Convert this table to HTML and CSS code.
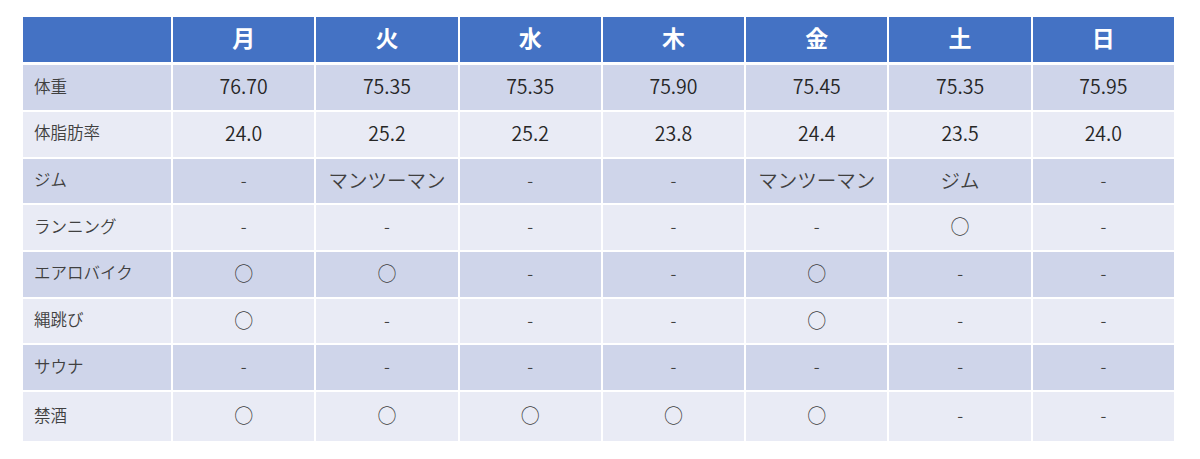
FILE: index.html
```html
<!DOCTYPE html>
<html lang="ja">
<head>
<meta charset="utf-8">
<title>週間記録</title>
<link rel="stylesheet" href="styles.css">
</head>
<body>
<div class="page">
  <div class="table">
    <div class="head">
      <div class="hcell"></div>
      <div class="hcell">月</div>
      <div class="hcell">火</div>
      <div class="hcell">水</div>
      <div class="hcell">木</div>
      <div class="hcell">金</div>
      <div class="hcell">土</div>
      <div class="hcell">日</div>
    </div>
    <div class="body">
      <div class="row dark">
        <div class="label">体重</div>
        <div class="cell">76.70</div><div class="cell">75.35</div><div class="cell">75.35</div><div class="cell">75.90</div><div class="cell">75.45</div><div class="cell">75.35</div><div class="cell">75.95</div>
      </div>
      <div class="row light">
        <div class="label">体脂肪率</div>
        <div class="cell">24.0</div><div class="cell">25.2</div><div class="cell">25.2</div><div class="cell">23.8</div><div class="cell">24.4</div><div class="cell">23.5</div><div class="cell">24.0</div>
      </div>
      <div class="row dark">
        <div class="label">ジム</div>
        <div class="cell dash">-</div><div class="cell kana">マンツーマン</div><div class="cell dash">-</div><div class="cell dash">-</div><div class="cell kana">マンツーマン</div><div class="cell kana">ジム</div><div class="cell dash">-</div>
      </div>
      <div class="row light">
        <div class="label">ランニング</div>
        <div class="cell dash">-</div><div class="cell dash">-</div><div class="cell dash">-</div><div class="cell dash">-</div><div class="cell dash">-</div><div class="cell mark">○</div><div class="cell dash">-</div>
      </div>
      <div class="row dark">
        <div class="label">エアロバイク</div>
        <div class="cell mark">○</div><div class="cell mark">○</div><div class="cell dash">-</div><div class="cell dash">-</div><div class="cell mark">○</div><div class="cell dash">-</div><div class="cell dash">-</div>
      </div>
      <div class="row light">
        <div class="label">縄跳び</div>
        <div class="cell mark">○</div><div class="cell dash">-</div><div class="cell dash">-</div><div class="cell dash">-</div><div class="cell mark">○</div><div class="cell dash">-</div><div class="cell dash">-</div>
      </div>
      <div class="row dark">
        <div class="label">サウナ</div>
        <div class="cell dash">-</div><div class="cell dash">-</div><div class="cell dash">-</div><div class="cell dash">-</div><div class="cell dash">-</div><div class="cell dash">-</div><div class="cell dash">-</div>
      </div>
      <div class="row light">
        <div class="label">禁酒</div>
        <div class="cell mark">○</div><div class="cell mark">○</div><div class="cell mark">○</div><div class="cell mark">○</div><div class="cell mark">○</div><div class="cell dash">-</div><div class="cell dash">-</div>
      </div>
    </div>
  </div>
</div>
</body>
</html>
```

FILE: styles.css
```css
html, body {
  margin: 0;
  padding: 0;
  background: #ffffff;
}

.page {
  padding: 17px 26px 0 23px;
  font-family: "Noto Sans CJK JP", "Noto Sans", sans-serif;
  color: #333333;
}

.table {
  width: 1151px;
  display: flex;
  flex-direction: column;
  gap: 3.8px;
}

.head,
.row {
  display: grid;
  grid-template-columns: 148px repeat(7, 1fr);
  column-gap: 2px;
}

.head {
  height: 44.5px;
}

.hcell {
  background: #4472c4;
  color: #ffffff;
  font-weight: 700;
  font-size: 23px;
  display: flex;
  align-items: center;
  justify-content: center;
  padding-bottom: 5px;
  box-sizing: border-box;
}

.body {
  display: grid;
  grid-template-rows: repeat(7, 44.7px) 48.8px;
  row-gap: 2px;
}

.dark > div {
  background: #cfd5ea;
}

.light > div {
  background: #e9ebf5;
}

.label {
  display: flex;
  align-items: center;
  padding-left: 11px;
  padding-bottom: 4px;
  font-size: 16.5px;
  font-weight: 350;
  color: #404040;
}

.cell {
  display: flex;
  align-items: center;
  justify-content: center;
  padding-bottom: 4px;
  font-size: 19.5px;
  font-weight: 350;
  color: #262626;
}

.kana {
  font-size: 19.5px;
  color: #404040;
}

.dash {
  font-size: 17px;
  color: #404040;
}

.mark {
  font-size: 19px;
  color: #404040;
}
```
